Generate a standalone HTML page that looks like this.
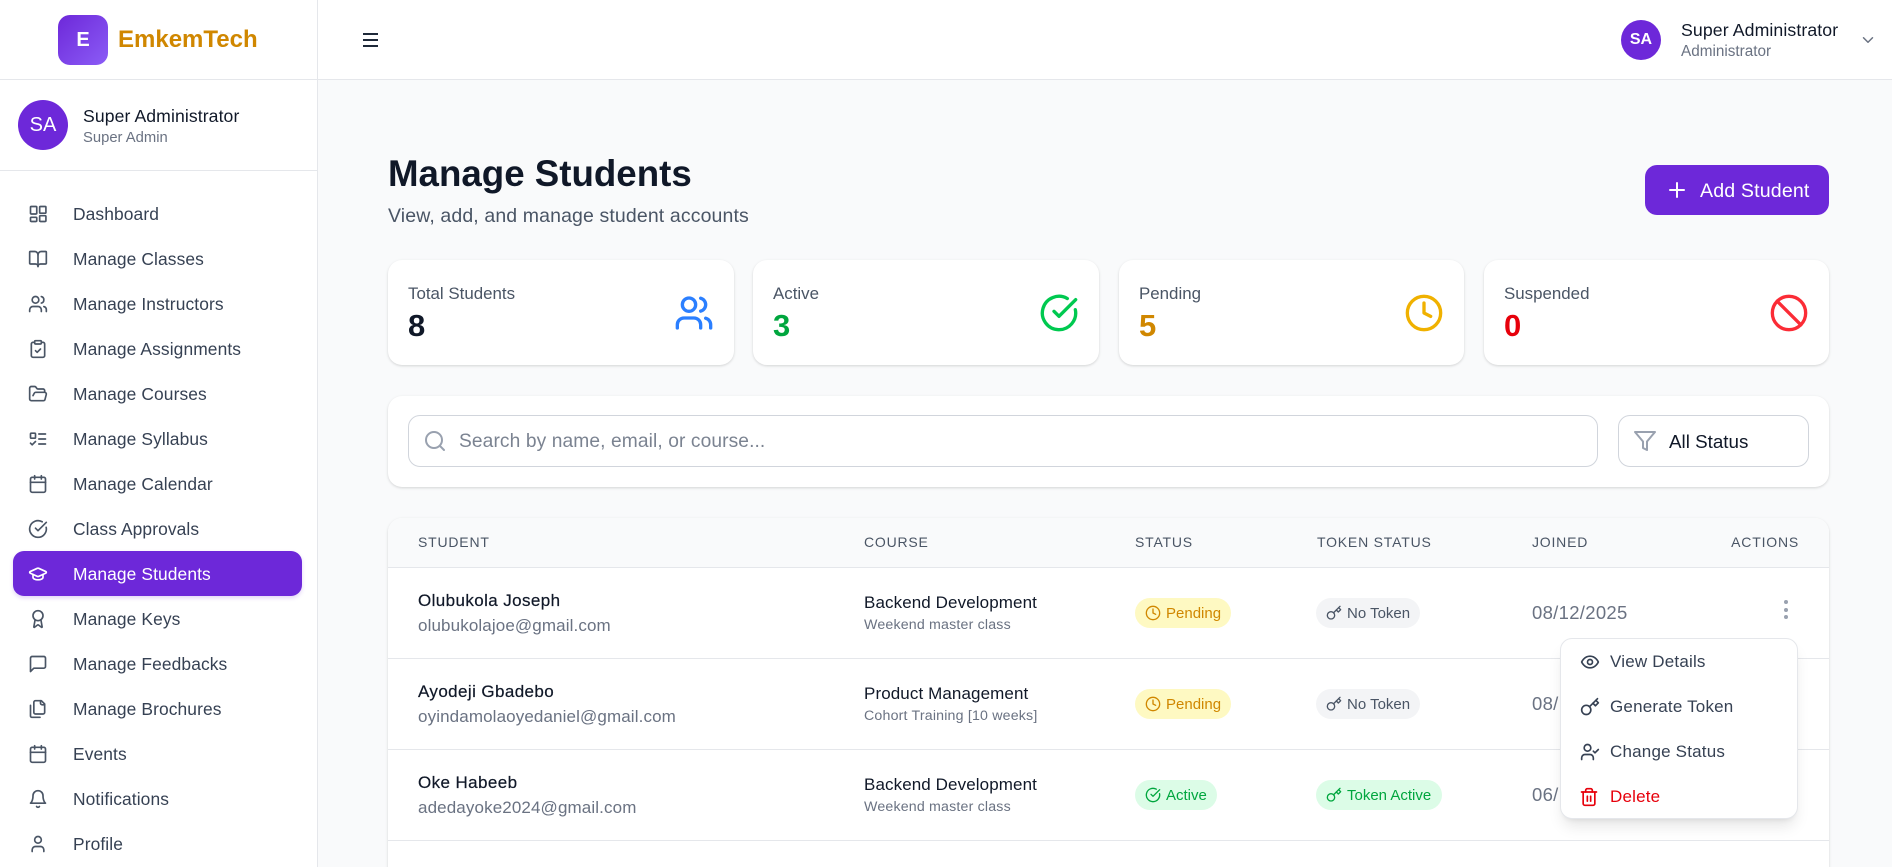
<!DOCTYPE html>
<html lang="en">
<head>
<meta charset="utf-8">
<title>Manage Students</title>
<style>
*{box-sizing:border-box;margin:0;padding:0}
html,body{width:1892px;height:867px;overflow:hidden;background:#f9fafb;font-family:"Liberation Sans",sans-serif;color:#101828}
#root{position:absolute;left:0;top:0;width:1892px;height:867px;overflow:hidden;background:#f9fafb}
.a{position:absolute}
.t{position:absolute;white-space:nowrap}
svg.i{position:absolute;fill:none;stroke:currentColor;stroke-width:2;stroke-linecap:round;stroke-linejoin:round}
.nav{position:absolute;left:73px;font-size:17.4px;line-height:24px;color:#364153;white-space:nowrap;letter-spacing:.1px}
.card{position:absolute;top:260px;height:105px;width:346px;background:#fff;border-radius:14px;box-shadow:0 1px 3px rgba(0,0,0,.1),0 1px 2px rgba(0,0,0,.06)}
.lb{position:absolute;left:20px;top:24px;font-size:16.9px;line-height:20px;color:#4a5565;white-space:nowrap}
.num{position:absolute;left:20px;top:48px;font-size:31px;line-height:36px;font-weight:700;white-space:nowrap}
.th{position:absolute;top:533px;font-size:14px;line-height:18px;letter-spacing:.8px;color:#4a5565;white-space:nowrap}
.nm{position:absolute;left:418px;font-size:17px;line-height:22px;color:#101828;white-space:nowrap;letter-spacing:.4px;-webkit-text-stroke:.2px #101828}
.em{position:absolute;left:418px;font-size:17px;line-height:22px;color:#6a7282;white-space:nowrap;letter-spacing:.12px}
.co{position:absolute;left:864px;font-size:17px;line-height:22px;color:#101828;white-space:nowrap;letter-spacing:.1px}
.su{position:absolute;left:864px;font-size:14.2px;line-height:18px;color:#6a7282;white-space:nowrap;letter-spacing:.18px}
.pill{position:absolute;height:30px;border-radius:15px}
.pill span{position:absolute;top:6.5px;font-size:15px;line-height:18px;white-space:nowrap}
.dt{position:absolute;left:1532px;font-size:18.5px;line-height:22px;color:#6a7282;white-space:nowrap;letter-spacing:.3px}
.ln{position:absolute;left:388px;width:1441px;height:1px;background:#e5e7eb}
.mi{position:absolute;left:1610px;font-size:17px;line-height:22px;color:#364153;white-space:nowrap;letter-spacing:.2px}
</style>
</head>
<body>
<svg width="0" height="0" style="position:absolute">
<symbol id="dash" viewBox="0 0 24 24"><rect x="3" y="3" width="7.5" height="9" rx="1"/><rect x="14" y="3" width="7.5" height="8" rx="1"/><rect x="3" y="16" width="7.5" height="5" rx="1"/><rect x="14" y="14" width="7.5" height="7" rx="1"/></symbol>
<symbol id="book" viewBox="0 0 24 24"><path d="M12 7v14"/><path d="M3 18a1 1 0 0 1-1-1V4a1 1 0 0 1 1-1h5a4 4 0 0 1 4 4 4 4 0 0 1 4-4h5a1 1 0 0 1 1 1v13a1 1 0 0 1-1 1h-6a3 3 0 0 0-3 3 3 3 0 0 0-3-3z"/></symbol>
<symbol id="users" viewBox="0 0 24 24"><path d="M16 21v-2a4 4 0 0 0-4-4H6a4 4 0 0 0-4 4v2"/><circle cx="9" cy="7" r="4"/><path d="M22 21v-2a4 4 0 0 0-3-3.87"/><path d="M16 3.13a4 4 0 0 1 0 7.75"/></symbol>
<symbol id="clip" viewBox="0 0 24 24"><rect x="8" y="2" width="8" height="4" rx="1"/><path d="M16 4h2a2 2 0 0 1 2 2v14a2 2 0 0 1-2 2H6a2 2 0 0 1-2-2V6a2 2 0 0 1 2-2h2"/><path d="m9 14 2 2 4-4"/></symbol>
<symbol id="folder" viewBox="0 0 24 24"><path d="m6 14 1.5-2.9A2 2 0 0 1 9.24 10H20a2 2 0 0 1 1.94 2.5l-1.54 6a2 2 0 0 1-1.95 1.5H4a2 2 0 0 1-2-2V5a2 2 0 0 1 2-2h3.9a2 2 0 0 1 1.69.9l.81 1.2a2 2 0 0 0 1.67.9H18a2 2 0 0 1 2 2v2"/></symbol>
<symbol id="todo" viewBox="0 0 24 24"><rect x="3" y="5" width="6" height="6" rx="1"/><path d="m3 17 2 2 4-4"/><path d="M13 6h8"/><path d="M13 12h8"/><path d="M13 18h8"/></symbol>
<symbol id="cal" viewBox="0 0 24 24"><path d="M8 2v4"/><path d="M16 2v4"/><rect x="3" y="4" width="18" height="18" rx="2"/><path d="M3 10h18"/></symbol>
<symbol id="check" viewBox="0 0 24 24"><path d="M21.801 10A10 10 0 1 1 17 3.335"/><path d="m9 11 3 3L22 4"/></symbol>
<symbol id="cap" viewBox="0 0 24 24"><path d="M21.42 10.922a1 1 0 0 0-.019-1.838L12.83 5.18a2 2 0 0 0-1.66 0L2.6 9.08a1 1 0 0 0 0 1.832l8.57 3.908a2 2 0 0 0 1.66 0z"/><path d="M6 12.5V16a6 3 0 0 0 12 0v-3.5"/></symbol>
<symbol id="award" viewBox="0 0 24 24"><path d="m15.477 12.89 1.515 8.526a.5.5 0 0 1-.81.47l-3.58-2.687a1 1 0 0 0-1.197 0l-3.586 2.686a.5.5 0 0 1-.81-.469l1.514-8.526"/><circle cx="12" cy="8" r="6"/></symbol>
<symbol id="msg" viewBox="0 0 24 24"><path d="M21 15a2 2 0 0 1-2 2H7l-4 4V5a2 2 0 0 1 2-2h14a2 2 0 0 1 2 2z"/></symbol>
<symbol id="files" viewBox="0 0 24 24"><path d="M20 7h-3a2 2 0 0 1-2-2V2"/><path d="M9 18a2 2 0 0 1-2-2V4a2 2 0 0 1 2-2h7l4 4v10a2 2 0 0 1-2 2Z"/><path d="M3 7.6v12.8A1.6 1.6 0 0 0 4.6 22h9.8"/></symbol>
<symbol id="bell" viewBox="0 0 24 24"><path d="M6 8a6 6 0 0 1 12 0c0 7 3 9 3 9H3s3-2 3-9"/><path d="M10.3 21a1.94 1.94 0 0 0 3.4 0"/></symbol>
<symbol id="user" viewBox="0 0 24 24"><path d="M19 21v-2a4 4 0 0 0-4-4H9a4 4 0 0 0-4 4v2"/><circle cx="12" cy="7" r="4"/></symbol>
<symbol id="clock" viewBox="0 0 24 24"><circle cx="12" cy="12" r="10"/><polyline points="12 6 12 12 16 14"/></symbol>
<symbol id="ban" viewBox="0 0 24 24"><circle cx="12" cy="12" r="10"/><path d="m4.9 4.9 14.2 14.2"/></symbol>
<symbol id="key" viewBox="0 0 24 24"><circle cx="7.5" cy="15.5" r="5.5"/><path d="m21 2-9.6 9.6"/><path d="m15.5 7.5 3 3L22 7l-3-3"/></symbol>
<symbol id="eye" viewBox="0 0 24 24"><path d="M2 12s3-7 10-7 10 7 10 7-3 7-10 7-10-7-10-7Z"/><circle cx="12" cy="12" r="3"/></symbol>
<symbol id="ucheck" viewBox="0 0 24 24"><path d="M16 21v-2a4 4 0 0 0-4-4H6a4 4 0 0 0-4 4v2"/><circle cx="9" cy="7" r="4"/><polyline points="16 11 18 13 22 9"/></symbol>
<symbol id="trash" viewBox="0 0 24 24"><path d="M3 6h18"/><path d="M19 6v14a2 2 0 0 1-2 2H7a2 2 0 0 1-2-2V6"/><path d="M8 6V4a2 2 0 0 1 2-2h4a2 2 0 0 1 2 2v2"/><line x1="10" y1="11" x2="10" y2="17"/><line x1="14" y1="11" x2="14" y2="17"/></symbol>
</svg>

<div id="root">
<!-- Header -->
<div class="a" style="left:0;top:0;width:1892px;height:80px;background:#fff;border-bottom:1px solid #e5e7eb"></div>

<!-- Sidebar -->
<div class="a" style="left:0;top:0;width:318px;height:867px;background:#fff;border-right:1px solid #e5e7eb"></div>
<div class="a" style="left:0;top:79px;width:318px;height:1px;background:#e5e7eb"></div>
<div class="a" style="left:0;top:170px;width:317px;height:1px;background:#e5e7eb"></div>

<div class="a" style="left:58px;top:15px;width:50px;height:50px;border-radius:12px;background:linear-gradient(135deg,#6d28d9,#8b5cf6)"></div>
<div class="t" style="left:58px;top:25px;width:50px;text-align:center;font-size:20px;line-height:30px;font-weight:700;color:#fff">E</div>
<div class="t" style="left:118px;top:25px;font-size:24px;line-height:30px;font-weight:700;color:#d08700">EmkemTech</div>

<div class="a" style="left:18px;top:100px;width:50px;height:50px;border-radius:50%;background:#6d28d9"></div>
<div class="t" style="left:18px;top:113px;width:50px;text-align:center;font-size:20px;line-height:24px;color:#fff">SA</div>
<div class="t" style="left:83px;top:105px;font-size:17.6px;line-height:22px;color:#101828;letter-spacing:.1px">Super Administrator</div>
<div class="t" style="left:83px;top:129px;font-size:14.8px;line-height:18px;color:#6a7282">Super Admin</div>

<div class="a" style="left:13px;top:551px;width:289px;height:45px;border-radius:11px;background:#6d28d9;box-shadow:0 2px 4px rgba(109,40,217,.2)"></div>

<svg class="i" style="left:28px;top:204px;color:#4a5565" width="20" height="20"><use href="#dash"/></svg><div class="nav" style="top:202px">Dashboard</div>
<svg class="i" style="left:28px;top:249px;color:#4a5565" width="20" height="20"><use href="#book"/></svg><div class="nav" style="top:247px">Manage Classes</div>
<svg class="i" style="left:28px;top:294px;color:#4a5565" width="20" height="20"><use href="#users"/></svg><div class="nav" style="top:292px">Manage Instructors</div>
<svg class="i" style="left:28px;top:339px;color:#4a5565" width="20" height="20"><use href="#clip"/></svg><div class="nav" style="top:337px">Manage Assignments</div>
<svg class="i" style="left:28px;top:384px;color:#4a5565" width="20" height="20"><use href="#folder"/></svg><div class="nav" style="top:382px">Manage Courses</div>
<svg class="i" style="left:28px;top:429px;color:#4a5565" width="20" height="20"><use href="#todo"/></svg><div class="nav" style="top:427px">Manage Syllabus</div>
<svg class="i" style="left:28px;top:474px;color:#4a5565" width="20" height="20"><use href="#cal"/></svg><div class="nav" style="top:472px">Manage Calendar</div>
<svg class="i" style="left:28px;top:519px;color:#4a5565" width="20" height="20"><use href="#check"/></svg><div class="nav" style="top:517px">Class Approvals</div>
<svg class="i" style="left:28px;top:564px;color:#fff" width="20" height="20"><use href="#cap"/></svg><div class="nav" style="top:562px;color:#fff">Manage Students</div>
<svg class="i" style="left:28px;top:609px;color:#4a5565" width="20" height="20"><use href="#award"/></svg><div class="nav" style="top:607px">Manage Keys</div>
<svg class="i" style="left:28px;top:654px;color:#4a5565" width="20" height="20"><use href="#msg"/></svg><div class="nav" style="top:652px">Manage Feedbacks</div>
<svg class="i" style="left:28px;top:699px;color:#4a5565" width="20" height="20"><use href="#files"/></svg><div class="nav" style="top:697px">Manage Brochures</div>
<svg class="i" style="left:28px;top:744px;color:#4a5565" width="20" height="20"><use href="#cal"/></svg><div class="nav" style="top:742px">Events</div>
<svg class="i" style="left:28px;top:789px;color:#4a5565" width="20" height="20"><use href="#bell"/></svg><div class="nav" style="top:787px">Notifications</div>
<svg class="i" style="left:28px;top:834px;color:#4a5565" width="20" height="20"><use href="#user"/></svg><div class="nav" style="top:832px">Profile</div>

<!-- Top bar -->
<div class="a" style="left:363px;top:33px;width:15px;height:2px;background:#1e2939"></div>
<div class="a" style="left:363px;top:39px;width:15px;height:2px;background:#1e2939"></div>
<div class="a" style="left:363px;top:45px;width:15px;height:2px;background:#1e2939"></div>
<div class="a" style="left:1621px;top:20px;width:40px;height:40px;border-radius:50%;background:#6d28d9"></div>
<div class="t" style="left:1621px;top:29px;width:40px;text-align:center;font-size:16px;line-height:22px;font-weight:700;color:#fff">SA</div>
<div class="t" style="left:1681px;top:19px;font-size:17.7px;line-height:22px;color:#101828;letter-spacing:.1px">Super Administrator</div>
<div class="t" style="left:1681px;top:43px;font-size:15.3px;line-height:18px;color:#6a7282">Administrator</div>
<svg class="i" style="left:1859px;top:31px;color:#6a7282" width="18" height="18"><path d="M4.5 6.75 9 11.25l4.5-4.5" stroke-width="1.5"/></svg>

<!-- Title -->
<div class="t" style="left:388px;top:152px;font-size:36.7px;line-height:44px;font-weight:700;color:#101828">Manage Students</div>
<div class="t" style="left:388px;top:204px;font-size:19.5px;line-height:24px;color:#4a5565;letter-spacing:.12px">View, add, and manage student accounts</div>
<div class="a" style="left:1645px;top:165px;width:184px;height:50px;border-radius:12px;background:#6d28d9"></div>
<svg class="i" style="left:1665px;top:178px;color:#fff" width="24" height="24"><path d="M5 12h14"/><path d="M12 5v14"/></svg>
<div class="t" style="left:1700px;top:179px;font-size:19.6px;line-height:24px;color:#fff;letter-spacing:.15px">Add Student</div>

<!-- Stat cards -->
<div class="card" style="left:388px"><div class="lb">Total Students</div><div class="num">8</div>
<svg class="i" style="left:286px;top:33px;color:#2b7fff" width="40" height="40"><use href="#users"/></svg></div>
<div class="card" style="left:753px"><div class="lb">Active</div><div class="num" style="color:#00a63e">3</div>
<svg class="i" style="left:286px;top:33px;color:#00c950" width="40" height="40"><use href="#check"/></svg></div>
<div class="card" style="left:1119px;width:345px"><div class="lb">Pending</div><div class="num" style="color:#d08700">5</div>
<svg class="i" style="left:285px;top:33px;color:#f0b100" width="40" height="40"><use href="#clock"/></svg></div>
<div class="card" style="left:1484px;width:345px"><div class="lb">Suspended</div><div class="num" style="color:#e7000b">0</div>
<svg class="i" style="left:285px;top:33px;color:#fb2c36" width="40" height="40"><use href="#ban"/></svg></div>

<!-- Filters -->
<div class="a" style="left:388px;top:396px;width:1441px;height:91px;background:#fff;border-radius:14px;box-shadow:0 1px 3px rgba(0,0,0,.1),0 1px 2px rgba(0,0,0,.06)"></div>
<div class="a" style="left:408px;top:415px;width:1190px;height:52px;border:1px solid #d1d5dc;border-radius:12px;background:#fff"></div>
<svg class="i" style="left:423px;top:429px;color:#99a1af" width="24" height="24"><circle cx="11" cy="11" r="8"/><path d="m21 21-4.3-4.3"/></svg>
<div class="t" style="left:459px;top:430px;font-size:19.2px;line-height:24px;color:#7b8391;letter-spacing:.1px">Search by name, email, or course...</div>
<div class="a" style="left:1618px;top:415px;width:191px;height:52px;border:1px solid #d1d5dc;border-radius:12px;background:#fff"></div>
<svg class="i" style="left:1633px;top:429px;color:#99a1af" width="24" height="24"><polygon points="22 3 2 3 10 12.46 10 19 14 21 14 12.46 22 3"/></svg>
<div class="t" style="left:1669px;top:430px;font-size:18.8px;line-height:24px;color:#101828">All Status</div>

<!-- Table -->
<div class="a" style="left:388px;top:518px;width:1441px;height:360px;background:#fff;border-radius:14px 14px 0 0;box-shadow:0 1px 3px rgba(0,0,0,.1),0 1px 2px rgba(0,0,0,.06)"></div>
<div class="a" style="left:388px;top:518px;width:1441px;height:49px;background:#f9fafb;border-radius:14px 14px 0 0"></div>
<div class="ln" style="top:567px"></div>
<div class="ln" style="top:658px"></div>
<div class="ln" style="top:749px"></div>
<div class="ln" style="top:840px"></div>

<div class="th" style="left:418px">STUDENT</div>
<div class="th" style="left:864px">COURSE</div>
<div class="th" style="left:1135px">STATUS</div>
<div class="th" style="left:1317px">TOKEN STATUS</div>
<div class="th" style="left:1532px">JOINED</div>
<div class="th" style="right:93px">ACTIONS</div>

<!-- Row 1 -->
<div class="nm" style="top:590px">Olubukola Joseph</div>
<div class="em" style="top:615px">olubukolajoe@gmail.com</div>
<div class="co" style="top:592px">Backend Development</div>
<div class="su" style="top:616px">Weekend master class</div>
<div class="pill" style="left:1135px;top:598px;width:96px;background:#fef9c2;color:#d08700"><svg class="i" style="left:10px;top:7px" width="16" height="16"><use href="#clock"/></svg><span style="left:31px">Pending</span></div>
<div class="pill" style="left:1316px;top:598px;width:104px;background:#f3f4f6;color:#4a5565"><svg class="i" style="left:10px;top:7px" width="16" height="16"><use href="#key"/></svg><span style="left:31px">No Token</span></div>
<div class="dt" style="top:602px">08/12/2025</div>
<div class="a" style="left:1784px;top:600px;width:4px;height:4px;border-radius:50%;background:#99a1af"></div>
<div class="a" style="left:1784px;top:608px;width:4px;height:4px;border-radius:50%;background:#99a1af"></div>
<div class="a" style="left:1784px;top:615px;width:4px;height:4px;border-radius:50%;background:#99a1af"></div>

<!-- Row 2 -->
<div class="nm" style="top:681px">Ayodeji Gbadebo</div>
<div class="em" style="top:706px">oyindamolaoyedaniel@gmail.com</div>
<div class="co" style="top:683px">Product Management</div>
<div class="su" style="top:707px">Cohort Training [10 weeks]</div>
<div class="pill" style="left:1135px;top:689px;width:96px;background:#fef9c2;color:#d08700"><svg class="i" style="left:10px;top:7px" width="16" height="16"><use href="#clock"/></svg><span style="left:31px">Pending</span></div>
<div class="pill" style="left:1316px;top:689px;width:104px;background:#f3f4f6;color:#4a5565"><svg class="i" style="left:10px;top:7px" width="16" height="16"><use href="#key"/></svg><span style="left:31px">No Token</span></div>
<div class="dt" style="top:693px">08/12/2025</div>

<!-- Row 3 -->
<div class="nm" style="top:772px">Oke Habeeb</div>
<div class="em" style="top:797px">adedayoke2024@gmail.com</div>
<div class="co" style="top:774px">Backend Development</div>
<div class="su" style="top:798px">Weekend master class</div>
<div class="pill" style="left:1135px;top:780px;width:82px;background:#dcfce7;color:#00a63e"><svg class="i" style="left:10px;top:7px" width="16" height="16"><use href="#check"/></svg><span style="left:31px">Active</span></div>
<div class="pill" style="left:1316px;top:780px;width:126px;background:#dcfce7;color:#00a63e"><svg class="i" style="left:10px;top:7px" width="16" height="16"><use href="#key"/></svg><span style="left:31px">Token Active</span></div>
<div class="dt" style="top:784px">06/12/2025</div>

<!-- Dropdown -->
<div class="a" style="left:1560px;top:638px;width:238px;height:181px;background:#fff;border:1px solid #e5e7eb;border-radius:12px;box-shadow:0 10px 15px -3px rgba(0,0,0,.1),0 4px 6px -4px rgba(0,0,0,.1)"></div>
<svg class="i" style="left:1580px;top:652px;color:#364153" width="20" height="20"><use href="#eye"/></svg><div class="mi" style="top:651px">View Details</div>
<svg class="i" style="left:1580px;top:697px;color:#364153" width="20" height="20"><use href="#key"/></svg><div class="mi" style="top:696px">Generate Token</div>
<svg class="i" style="left:1580px;top:742px;color:#364153" width="20" height="20"><use href="#ucheck"/></svg><div class="mi" style="top:741px">Change Status</div>
<svg class="i" style="left:1579px;top:787px;color:#e7000b" width="20" height="20"><use href="#trash"/></svg><div class="mi" style="top:786px;color:#e7000b">Delete</div>
</div>
</body>
</html>
